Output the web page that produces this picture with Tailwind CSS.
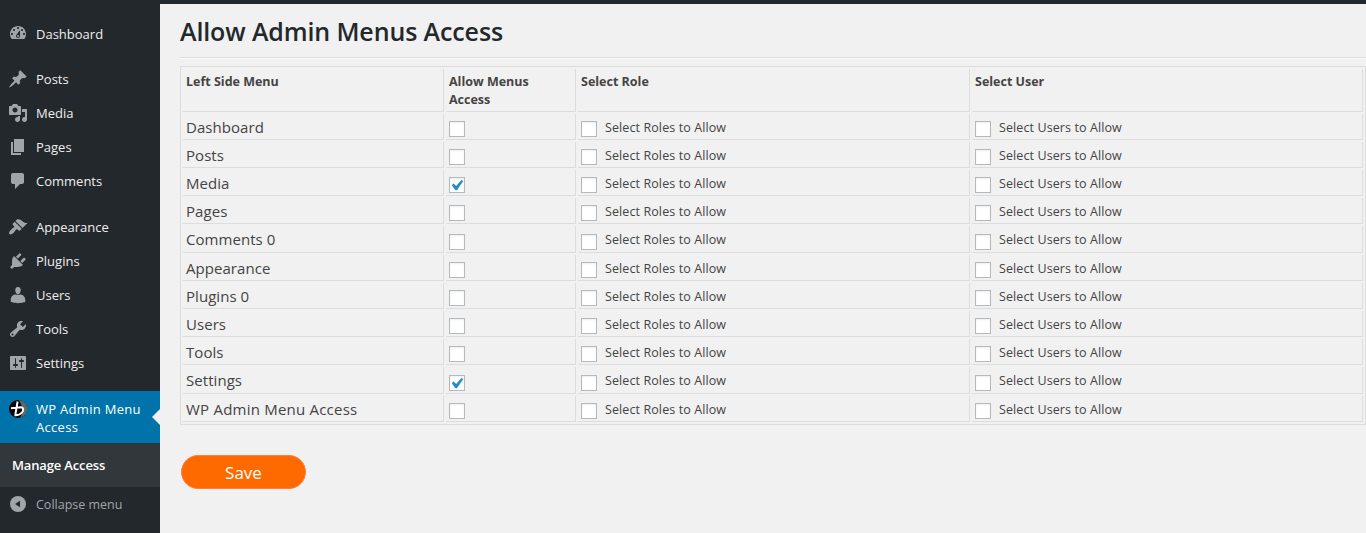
<!DOCTYPE html>
<html lang="en">
<head>
<meta charset="utf-8">
<title>Allow Admin Menus Access</title>
<script src="https://cdn.jsdelivr.net/npm/@tailwindcss/browser@4"></script>
</head>
<body class="bg-[#f1f1f1] font-['Open_Sans','Noto_Sans',sans-serif] text-[#444] h-[533px] overflow-hidden flex flex-col">
<div class="h-1 shrink-0 bg-[#23282d]"></div>
<div class="flex flex-1 min-h-0">
  <nav class="w-40 shrink-0 bg-[#23282d] text-[#eee] text-[13px] leading-[18px] pt-[13px]">
    <ul id="menu"></ul>
    <a class="relative flex h-[52px] bg-[#0073aa] text-white pt-[9px]">
      <span class="w-9 shrink-0 flex justify-center">
        <svg class="size-[18px]" viewBox="0 0 18 18"><circle cx="9" cy="9" r="9" fill="#050505"/><path d="M9.500 0A9 9 0 0 1 11 17.800C14.500 14 14 5 9.500 0z" fill="#666"/><path d="M8.600 1.500L6.300 14.800M2 8.300L12 7.300c2.700.1 2.700 3 1 5.200-1.600 2-4.300 2.900-7.600 2.700" fill="none" stroke="#fff" stroke-width="2"/></svg>
      </span>
      <span class="w-[112px] tracking-[0.3px]">WP Admin Menu Access</span>
      <span class="absolute right-0 top-[18px] border-8 border-transparent border-r-[#f1f1f1]"></span>
    </a>
    <div class="h-11 bg-[#32373c] text-white font-semibold pl-3 leading-[44px] tracking-[-0.15px]">Manage Access</div>
    <a class="flex items-center h-9 text-[#a0a5aa] text-[12.5px]">
      <span class="w-9 flex justify-center"><svg class="size-4 -mt-[2px]" viewBox="0 0 16 16"><circle cx="8" cy="8" r="8" fill="#a0a5aa"/><path d="M10 4.700v6.600L5 8z" fill="#23282d"/></svg></span>
      <span>Collapse menu</span>
    </a>
  </nav>
  <main class="flex-1 pl-5">
    <h1 class="h-[53px] text-[25px] leading-[55px] font-semibold text-[#23282d] tracking-[-0.12px]">Allow Admin Menus Access</h1>
    <hr class="h-[2px] border-t border-b border-t-[#ddd] border-b-[#fafafa]">
    <div class="mt-[7px] w-[1186px] border border-[#ddd] p-[2px] flex flex-col gap-[2px]" id="grid">
      <div class="grid grid-cols-[261px_130px_392px_391px] gap-[2px] h-[42.7px] text-[12.5px] leading-[18px] font-bold">
        <div class="border-r border-b border-[#ddd] pl-[3px] pt-1">Left Side Menu</div>
        <div class="border-r border-b border-[#ddd] pl-[3px] pt-1 pr-8">Allow Menus Access</div>
        <div class="border-r border-b border-[#ddd] pl-[3px] pt-1">Select Role</div>
        <div class="border-r border-b border-[#ddd] pl-[3px] pt-1">Select User</div>
      </div>
    </div>
    <button class="mt-[30.300px] ml-px block w-[125px] h-[34px] rounded-full bg-[#ff6a00] border border-[#ff7f3f] text-white text-[17px] leading-[32px] pt-px">Save</button>
  </main>
</div>
<script>
const icons = {
  Dashboard: 'M3.76 16h12.48c1.1-1.37 1.76-3.11 1.76-5 0-4.42-3.58-8-8-8s-8 3.58-8 8c0 1.89.66 3.63 1.76 5zM10 4c.55 0 1 .45 1 1s-.45 1-1 1-1-.45-1-1 .45-1 1-1zM6 6c.55 0 1 .45 1 1s-.45 1-1 1-1-.45-1-1 .45-1 1-1zm8 0c.55 0 1 .45 1 1s-.45 1-1 1-1-.45-1-1 .45-1 1-1zm-5.37 5.55L12 7v6c0 1.1-.9 2-2 2s-2-.9-2-2c0-.57.24-1.08.63-1.45zM4 10c.55 0 1 .45 1 1s-.45 1-1 1-1-.45-1-1 .45-1 1-1zm12 0c.55 0 1 .45 1 1s-.45 1-1 1-1-.45-1-1 .45-1 1-1zm-5 3c0-.55-.45-1-1-1s-1 .45-1 1 .45 1 1 1 1-.45 1-1z',
  Posts: 'M10.44 3.02l1.82-1.82 6.36 6.35-1.83 1.82c-1.05-.68-2.48-.57-3.41.36l-.75.75c-.92.93-1.04 2.35-.35 3.41l-1.83 1.82-2.41-2.41-2.8 2.79c-.42.42-3.38 2.71-3.8 2.29s1.86-3.39 2.28-3.81l2.79-2.79L4.1 9.36l1.83-1.82c1.05.69 2.48.57 3.4-.36l.75-.75c.93-.92 1.05-2.35.36-3.41z',
  Media: 'M13 11V4c0-.55-.45-1-1-1h-1.67L9 1H5L3.67 3H2c-.55 0-1 .45-1 1v7c0 .55.45 1 1 1h10c.55 0 1-.45 1-1zM7 4.500c1.380 0 2.500 1.120 2.500 2.500S8.380 9.500 7 9.500 4.500 8.380 4.500 7 5.620 4.500 7 4.500zM14 6h5v10.500c0 1.380-1.120 2.500-2.500 2.500S14 17.880 14 16.500s1.120-2.500 2.500-2.500c.17 0 .34.02.5.05V9h-3V6zm-4 8.050V13h2v3.500c0 1.380-1.120 2.500-2.500 2.500S7 17.880 7 16.500 8.120 14 9.500 14c.17 0 .34.02.5.05z',
  Pages: 'M6 15V2h10v13H6zm-1 1h8v2H3V5h2v11z',
  Comments: 'M5 2h9c1.100 0 2 .9 2 2v7c0 1.100-.9 2-2 2h-2l-5 5v-5H5c-1.100 0-2-.9-2-2V4c0-1.100.9-2 2-2z',
  Appearance: 'M14.480 11.060L7.410 3.990l1.500-1.500c.5-.56 2.300-.47 3.510.32 1.210.8 1.430 1.280 2.910 2.100 1.180.64 2.450 1.260 4.450.85zm-.71.71L6.700 4.700 4.930 6.470c-.39.39-.39 1.020 0 1.410l1.060 1.060c.39.39.39 1.030 0 1.420-.6.6-1.430 1.110-2.210 1.690-.35.26-.7.53-1.010.84C1.430 14.230.4 16.080 1.400 17.070c.99 1 2.840-.03 4.180-1.360.31-.31.58-.66.85-1.020.57-.78 1.080-1.610 1.690-2.210.39-.39 1.020-.39 1.410 0l1.060 1.060c.39.39 1.020.39 1.410 0z',
  Plugins: 'M13.110 4.360L9.870 7.600 8 5.730l3.240-3.240c.35-.34 1.050-.2 1.560.32.52.51.66 1.210.31 1.550zm-8 1.770l.91-1.120 9.010 9.010-1.190.84c-.71.71-2.630 1.160-3.820 1.160H6.140L4.900 17.260c-.59.59-1.540.59-2.120 0-.59-.58-.59-1.530 0-2.120l1.240-1.240v-3.880c0-1.130.4-3.190 1.090-3.890zm7.260 3.970l3.240-3.240c.34-.35 1.040-.21 1.550.31.52.51.66 1.210.31 1.550l-3.240 3.250z',
  Users: 'M10 9.250c-2.270 0-2.730-3.440-2.730-3.440C7 4.020 7.820 2 9.970 2c2.160 0 2.980 2.020 2.710 3.810 0 0-.41 3.440-2.680 3.440zM7.230 9.500c.8.200 1.700.300 2.770.300s1.970-.100 2.720-.300c2.390 0 4.520 2.830 4.520 5.030v2.490s-3.650 1.130-7.240 1.130c-3.650 0-7.240-1.130-7.240-1.130v-2.490c0-2.250 1.940-5.030 4.470-5.030z',
  Tools: 'M16.680 9.770c-1.340 1.340-3.300 1.670-4.950.99l-5.410 6.520c-.99.99-2.590.99-3.580 0s-.99-2.590 0-3.570l6.520-5.420c-.68-1.650-.35-3.610.99-4.950 1.280-1.280 3.120-1.620 4.720-1.060l-2.890 2.890 2.820 2.820 2.860-2.870c.53 1.580.18 3.390-1.080 4.650zM3.810 16.210c.4.39 1.040.39 1.430 0 .4-.4.4-1.040 0-1.430-.39-.4-1.030-.4-1.430 0-.39.39-.39 1.030 0 1.430z',
  Settings: 'M18 16V4c0-.55-.45-1-1-1H3c-.55 0-1 .45-1 1v12c0 .55.45 1 1 1h14c.55 0 1-.45 1-1zM8 11h1c.55 0 1 .45 1 1s-.45 1-1 1H8v1.500c0 .28-.22.5-.5.5s-.5-.22-.5-.5V13H6c-.55 0-1-.45-1-1s.45-1 1-1h1V5.500c0-.28.22-.5.5-.5s.5.22.5.5V11zm5-2h-1c-.55 0-1-.45-1-1s.45-1 1-1h1V5.500c0-.28.22-.5.5-.5s.5.22.5.5V7h1c.55 0 1 .45 1 1s-.45 1-1 1h-1v5.500c0 .28-.22.5-.5.5s-.5-.22-.5-.5V9z'
};
const gap = { Dashboard: 'mb-[11px]', Comments: 'mb-3', Settings: 'mb-[11px]' };
document.getElementById('menu').innerHTML = Object.entries(icons).map(([name, d]) =>
  `<li class="flex items-center h-[34px] ${gap[name] || ''}"><span class="w-9 flex justify-center"><svg class="size-5 fill-[#a0a5aa] ${name === 'Dashboard' ? '-mt-[2px]' : ''}" viewBox="0 0 20 20"><path fill-rule="evenodd" d="${d}"/></svg></span><span>${name}</span></li>`).join('');

const check = '<svg class="absolute -left-[4px] -top-[3px] size-[21px] fill-[#1e8cbe] stroke-[#1e8cbe]" stroke-width="0.5" viewBox="0 0 20 20"><path d="M14.830 4.890l1.340.94-5.810 8.380H9.020L5.780 9.670l1.340-1.250 2.570 2.400z"/></svg>';
const box = on => `<span class="relative shrink-0 mt-[7.2px] size-4 bg-white border border-[#b4b9be] shadow-[inset_0_1px_2px_rgba(0,0,0,0.07)]">${on ? check : ''}</span>`;
const cell = 'border-r border-b border-[#ddd] pl-[3px] flex items-start';
const rows = ['Dashboard','Posts','Media','Pages','Comments 0','Appearance','Plugins 0','Users','Tools','Settings','WP Admin Menu Access'];
document.getElementById('grid').insertAdjacentHTML('beforeend', rows.map(r => `
  <div class="grid grid-rows-[26.2px] grid-cols-[261px_130px_392px_391px] gap-[2px] h-[26.2px] text-[12.5px] leading-[28px] tracking-[0.1px]">
    <div class="${cell} text-[15px] leading-[26px] ${r.length > 12 ? 'tracking-[0.22px]' : 'tracking-[0.05px]'}">${r}</div>
    <div class="${cell}">${box(r === 'Media' || r === 'Settings')}</div>
    <div class="${cell}">${box()}<span class="ml-2">Select Roles to Allow</span></div>
    <div class="${cell}">${box()}<span class="ml-2">Select Users to Allow</span></div>
  </div>`).join(''));
</script>
</body>
</html>
